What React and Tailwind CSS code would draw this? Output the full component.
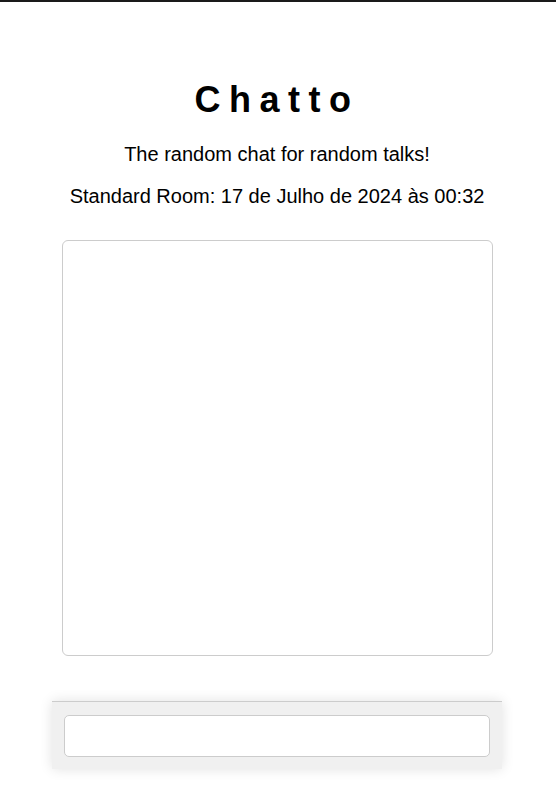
export default function App() {
  return (
    <div className="min-h-[791px] bg-white font-['Liberation_Sans',Arial,sans-serif] text-black">
      <div className="h-[2px] bg-[#1a1a1a]" />
      <div className="flex flex-col items-center pr-[2px] pt-[77px]">
        <h1 className="text-[36px] leading-[41px] font-bold tracking-[8.5px]">Chatto</h1>
        <p className="mt-[23px] text-[20px] leading-[23px]">The random chat for random talks!</p>
        <p className="mt-[19px] text-[20px] leading-[23px]">Standard Room: 17 de Julho de 2024 às 00:32</p>
        <div className="mt-[32px] h-[416px] w-[431px] rounded-[6px] border border-[#cccccc] bg-white" />
        <div className="mt-[45px] w-[450px] border-t border-[#cccccc] bg-[#f0f0f0] px-[12px] pt-[13px] pb-[12px] shadow-[0_0_12px_rgba(0,0,0,0.12)]">
          <input
            type="text"
            className="block h-[42px] w-full rounded-[5px] border border-[#cccccc] bg-white px-[10px] text-[16px] outline-none"
          />
        </div>
      </div>
    </div>
  );
}
